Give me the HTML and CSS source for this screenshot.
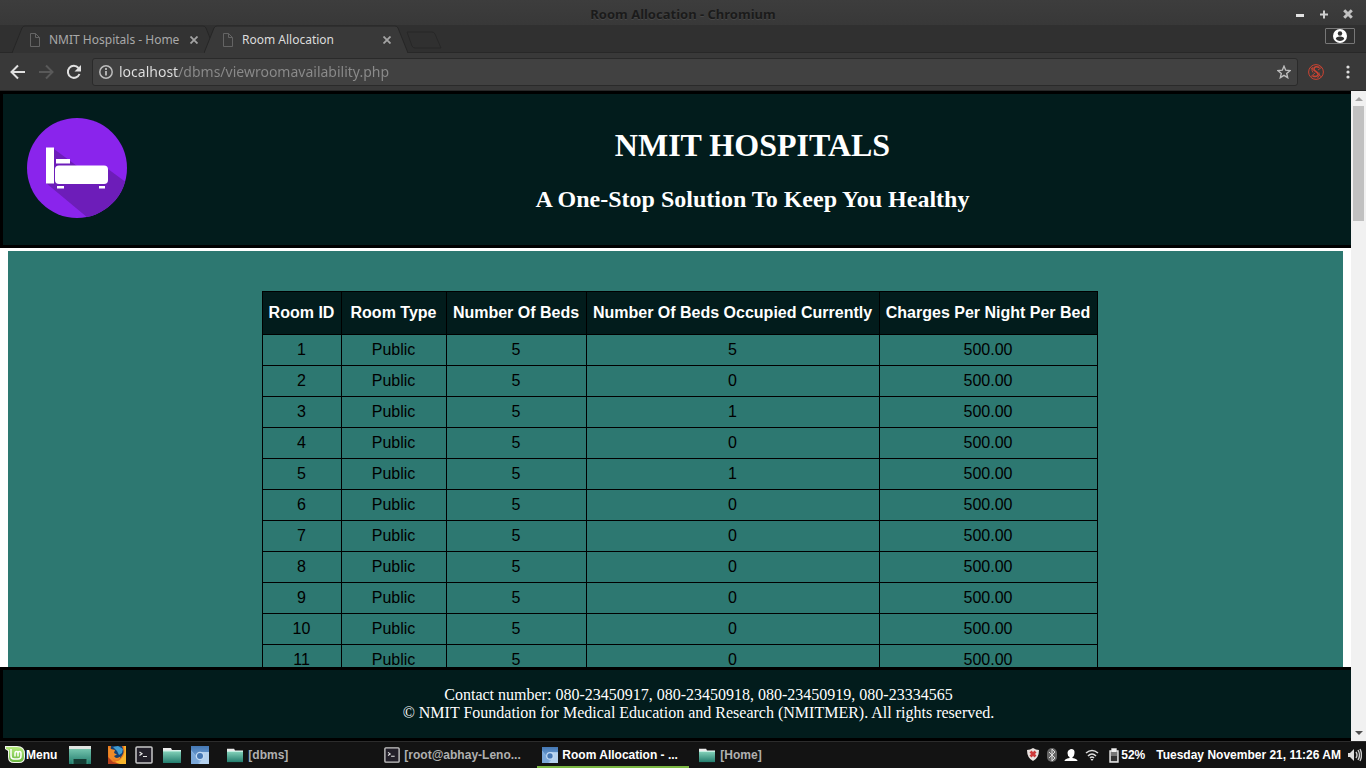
FILE: index.html
```html
<!DOCTYPE html>
<html lang="en">
<head>
<meta charset="utf-8">
<title>Room Allocation</title>
<link rel="stylesheet" href="styles.css">
</head>
<body>
<svg class="defs" aria-hidden="true">
  <defs>
    <linearGradient id="teal" x1="0" y1="0" x2="0" y2="1"><stop offset="0" stop-color="#84d2ba"/><stop offset="1" stop-color="#237d6e"/></linearGradient>
    <linearGradient id="mint" x1="0" y1="0" x2="0" y2="1"><stop offset="0" stop-color="#b5ec7e"/><stop offset="1" stop-color="#69b53f"/></linearGradient>
    <linearGradient id="sky" x1="0" y1="0" x2="0" y2="1"><stop offset="0" stop-color="#4478b4"/><stop offset="1" stop-color="#6b9bd0"/></linearGradient>
    <symbol id="folder" viewBox="0 0 20 18"><path d="M1 2h8l1 2h9v13H1z" fill="#ededed"/><path d="M1 5h18v12H1z" fill="url(#teal)"/><path d="M1 5h18" stroke="#c9f2e6"/></symbol>
    <symbol id="terminal" viewBox="0 0 18 18"><rect x="1" y="1" width="16" height="16" rx="1" fill="#221f29" stroke="#c9c9c9" stroke-width="1.5"/><path d="M4.500 6l2.500 1.800-2.500 1.800M8 10.500h4" fill="none" stroke="#e5e5e5" stroke-width="1.2"/></symbol>
    <symbol id="chromium" viewBox="0 0 18 18"><rect width="18" height="18" rx="1" fill="#8db6e2"/><path d="M0 0h18v6H9L5 10 0 4z" fill="url(#sky)"/><path d="M9 6h9v12H8l5-8z" fill="#b4d1ee"/><path d="M0 5l5 6 3 3-1 4H0z" fill="#7ba8d9"/><circle cx="9" cy="10" r="4.300" fill="#c4dbf3"/><circle cx="9" cy="10" r="3" fill="#4577b3"/></symbol>
    <symbol id="page" viewBox="0 0 10 14"><path d="M.5.5h5l4 4v9h-9zM5.500 .5v4h4" fill="none" stroke="#646464"/></symbol>
    <symbol id="cross" viewBox="0 0 8 8"><path d="M.5.5l7 7M7.500 .5l-7 7" stroke="currentColor" stroke-width="1.8"/></symbol>
  </defs>
</svg>
<div class="titlebar">
  <span class="title">Room Allocation - Chromium</span>
  <div class="window-controls">
    <button aria-label="Minimize"><svg width="10" height="12"><path d="M1 7.500h8" stroke="#e2e2e2" stroke-width="3"/></svg></button>
    <button aria-label="Maximize"><svg width="10" height="12"><path d="M1 6.500h8M5 2.500v8" stroke="#cfcfcf" stroke-width="2"/></svg></button>
    <button aria-label="Close"><svg width="10" height="12"><path d="M1.200 2.200l7.600 7.600M8.800 2.200L1.200 9.800" stroke="#c2c2c2" stroke-width="3"/></svg></button>
  </div>
</div>
<div class="tabstrip">
  <div class="tab">
    <svg class="tab-shape" viewBox="0 0 204 28" preserveAspectRatio="none"><path d="M0 28L10 3Q11 1 13 1H191Q193 1 194 3L204 28" fill="#333" stroke="#262626"/></svg>
    <svg class="page-icon"><use href="#page"/></svg><a href="#home">NMIT Hospitals - Home</a>
    <button class="tab-close" aria-label="Close tab"><svg width="8" height="8"><use href="#cross"/></svg></button>
  </div>
  <div class="tab active">
    <svg class="tab-shape" viewBox="0 0 204 28" preserveAspectRatio="none"><path d="M0 28L10 3Q11 1 13 1H191Q193 1 194 3L204 28" fill="#393939" stroke="#262626"/></svg>
    <svg class="page-icon"><use href="#page"/></svg><a href="#rooms">Room Allocation</a>
    <button class="tab-close" aria-label="Close tab"><svg width="8" height="8"><use href="#cross"/></svg></button>
  </div>
  <button class="new-tab" aria-label="New tab"><svg width="36" height="18"><path d="M1 1h25q2 0 3 2l6 14H9q-2 0-3-2z" fill="#303030" stroke="#272727"/></svg></button>
  <button class="profile" aria-label="Profile"><svg width="14" height="14"><circle cx="7" cy="7" r="7" fill="#fff"/><circle cx="7" cy="4.500" r="2.200" fill="#303030"/><path d="M2.800 10q0-2.500 4.200-2.500t4.200 2.500Q9.500 12 7 12t-4.200-2z" fill="#303030"/></svg></button>
</div>
<div class="toolbar">
  <button aria-label="Back"><svg width="16" height="16"><path d="M15 8H2M8 1.500L1.500 8 8 14.500" fill="none" stroke="#e0e0e0" stroke-width="2"/></svg></button>
  <button aria-label="Forward"><svg width="16" height="16"><path d="M1 8h13M8 1.500L14.500 8 8 14.500" fill="none" stroke="#595959" stroke-width="2"/></svg></button>
  <button aria-label="Reload"><svg width="16" height="16"><path d="M13.500 10A6 6 0 1 1 12.500 4" fill="none" stroke="#e0e0e0" stroke-width="2"/><path d="M15 1v6.500H8.500z" fill="#e0e0e0"/></svg></button>
  <div class="address">
    <svg width="14" height="14"><circle cx="7" cy="7" r="6.200" fill="none" stroke="#bdbdbd" stroke-width="1.500"/><path d="M7 6v4.500M7 3v2" stroke="#bdbdbd" stroke-width="1.800"/></svg>
    <input type="text" aria-label="Address" value="localhost/dbms/viewroomavailability.php">
    <button aria-label="Bookmark"><svg width="14" height="14"><path d="M7 1.200l1.700 4 4.300.4-3.300 2.800 1 4.300L7 10.400l-3.700 2.300 1-4.300L1 5.600l4.300-.4z" fill="none" stroke="#bdbdbd" stroke-width="1.400"/></svg></button>
  </div>
  <button class="extension" aria-label="Extension"><svg width="16" height="16" fill="none" stroke="#cb4433"><circle cx="8" cy="8" r="7.400" stroke-width="1"/><path d="M11.500 3.500Q7 1.500 6 4.500C5 7.500 11 7.500 10 11 9 13 6 12.500 4.500 12" stroke-width="1.500"/><path d="M2.500 3.500l11 9.500M3 12.500l4-3.500M10 6l4-3M11 8.500q1.500 3-1.500 5.500M5 3Q2.500 6 5 8.500" stroke-width=".9"/></svg></button>
  <button aria-label="Browser menu"><svg width="16" height="16" fill="#dedede"><circle cx="8" cy="3" r="1.600"/><circle cx="8" cy="8" r="1.600"/><circle cx="8" cy="13" r="1.600"/></svg></button>
</div>
<div class="viewport">
  <div class="page">
    <header class="banner">
      <svg class="logo" width="100" height="100" viewBox="0 0 100 100" role="img" aria-label="Hospital bed">
        <defs><clipPath id="disc"><circle cx="50" cy="50" r="50"/></clipPath></defs>
        <g clip-path="url(#disc)"><path d="M0 0h100v100H0z" fill="#8a24ec"/><path d="M19 65l42 35h39V65L81 51 50 48 27 31z" fill="#6d1db9"/></g>
        <path d="M19 29.500h8v36h-8zM29 41h14v4.500H29zM30 68h7v2.500h-7zM72 68h6v2.500h-6z" fill="#fff"/><rect x="28" y="47.500" width="53" height="18.500" rx="4" fill="#fff"/>
      </svg>
      <div class="heading"><h1>NMIT HOSPITALS</h1><h2>A One-Stop Solution To Keep You Healthy</h2></div>
    </header>
    <main class="content">
      <table>
        <colgroup><col class="id"><col class="type"><col class="beds"><col class="occupied"><col class="charges"></colgroup>
        <thead><tr><th>Room ID</th><th>Room Type</th><th>Number Of Beds</th><th>Number Of Beds Occupied Currently</th><th>Charges Per Night Per Bed</th></tr></thead>
        <tbody>
          <tr><td>1</td><td>Public</td><td>5</td><td>5</td><td>500.00</td></tr>
          <tr><td>2</td><td>Public</td><td>5</td><td>0</td><td>500.00</td></tr>
          <tr><td>3</td><td>Public</td><td>5</td><td>1</td><td>500.00</td></tr>
          <tr><td>4</td><td>Public</td><td>5</td><td>0</td><td>500.00</td></tr>
          <tr><td>5</td><td>Public</td><td>5</td><td>1</td><td>500.00</td></tr>
          <tr><td>6</td><td>Public</td><td>5</td><td>0</td><td>500.00</td></tr>
          <tr><td>7</td><td>Public</td><td>5</td><td>0</td><td>500.00</td></tr>
          <tr><td>8</td><td>Public</td><td>5</td><td>0</td><td>500.00</td></tr>
          <tr><td>9</td><td>Public</td><td>5</td><td>0</td><td>500.00</td></tr>
          <tr><td>10</td><td>Public</td><td>5</td><td>0</td><td>500.00</td></tr>
          <tr><td>11</td><td>Public</td><td>5</td><td>0</td><td>500.00</td></tr>
        </tbody>
      </table>
    </main>
    <footer class="contact">
      <p>Contact number: 080-23450917, 080-23450918, 080-23450919, 080-23334565</p>
      <p>© NMIT Foundation for Medical Education and Research (NMITMER). All rights reserved.</p>
    </footer>
  </div>
  <div class="scrollbar">
    <svg width="15" height="15"><path d="M4 10h8L8 6z" fill="#a3a3a3"/></svg>
    <div class="thumb"></div>
    <svg class="down" width="15" height="15"><path d="M4 5h8L8 9z" fill="#505050"/></svg>
  </div>
</div>
<div class="taskbar">
  <button class="menu"><svg width="20" height="18"><path d="M0 0h12q8 0 8 8v3q0 6-6 6H9q-6 0-6-6V5L0 3z" fill="#f3f7ee"/><path d="M1 1h11q7 0 7 7v3q0 5-5 5H9q-5 0-5-5V4L1 3z" fill="url(#mint)"/><path d="M6 3v7q0 3 3 3h4q3 0 3-3V7.500q0-2-1.500-2T13 7.500v3M13 7.500q0-2-1.500-2T10 7.500v3" fill="none" stroke="#fff" stroke-width="1.500"/></svg>Menu</button>
  <div class="launchers">
    <button class="desktop" aria-label="Show desktop"><svg width="22" height="18"><path d="M0 0h22v18H0z" fill="url(#teal)"/><path d="M0 0h22v3H0z" fill="#e1e5e2"/><path d="M4 13h14v5H4z" fill="#153c34"/><path d="M0 13h4v5M18 18v-5h4" stroke="#439b85" fill="none"/></svg></button>
    <button aria-label="Firefox"><svg width="18" height="18"><path d="M0 0h18v18H0z" fill="#e97820"/><path d="M3 0h12l1 6-4 7-6 1-4-6z" fill="#163f70"/><path d="M5 1l5-1 5 3-1 4-3 2-2-4z" fill="#3f9bd0"/><path d="M0 1l3 2 4 1-1 3 3 1.500L6 10q2 3.500 6.500.5L11 15H6L1 12z" fill="#ef8a27"/><path d="M14 0q4 8-2 12.500Q8 15 4 12l4 6h10V0z" fill="#e97820"/><path d="M16 0q2 8-3 13-3 3-6 2l3 3h8V0z" fill="#f7b42c"/><path d="M0 11l5 5 7 2H0z" fill="#b5401d"/></svg></button>
    <button aria-label="Terminal"><svg width="18" height="18"><use href="#terminal"/></svg></button>
    <button aria-label="Files"><svg width="20" height="18"><use href="#folder"/></svg></button>
    <button aria-label="Chromium"><svg width="18" height="18"><use href="#chromium"/></svg></button>
  </div>
  <div class="tasks">
    <button class="task"><svg width="18" height="16"><use href="#folder"/></svg>[dbms]</button>
    <button class="task"><svg width="16" height="16"><use href="#terminal"/></svg>[root@abhay-Leno...</button>
    <button class="task current"><svg width="16" height="16"><use href="#chromium"/></svg>Room Allocation - ...</button>
    <button class="task"><svg width="18" height="16"><use href="#folder"/></svg>[Home]</button>
  </div>
  <div class="tray">
    <svg width="14" height="16"><path d="M7 1q3 2 6 2 0 8-6 11Q1 11 1 3q3 0 6-2z" fill="#e8e2df"/><path d="M4.500 4.500l5 5M9.500 4.500l-5 5" stroke="#ce3a3a" stroke-width="2.800"/></svg>
    <svg width="10" height="16"><rect y="1" width="10" height="14" rx="5" fill="#666"/><path d="M2 5l6 6-3 3V2l3 3-6 6" fill="none" stroke="#ddd"/></svg>
    <svg width="14" height="16"><path d="M7 2q4 0 3.500 4T8.500 10v1q5 1 5 3H.5q0-2 5-3v-1Q3.500 9 3.500 6T7 2z" fill="#fff"/></svg>
    <svg width="14" height="16" fill="none" stroke="#ddd" stroke-width="1.600"><path d="M1 6q6-5 12 0M3 9q4-4 8 0M5 11q2-2 4 0"/><path d="M5.500 12h3L7 14z" fill="#eee" stroke="none"/></svg>
    <div class="battery"><svg width="10" height="16"><path d="M1 4h2V2h4v2h2v11H1z" fill="#777" stroke="#e5e5e5" stroke-width="1.400"/><path d="M2 9h6v5H2z" fill="#333"/><path d="M3 2h4v3H3z" fill="#eee"/></svg>52%</div>
    <time datetime="2017-11-21T11:26">Tuesday November 21, 11:26 AM</time>
    <svg width="14" height="16"><path d="M0 6h2l4-4v12l-4-4H0z" fill="#ddd"/><path d="M8 5q2 3 0 6M10 3q3 5 0 10M12 2q3 6 0 12" fill="none" stroke="#ccc" stroke-width="1.400"/></svg>
  </div>
</div>
</body>
</html>
```
FILE: styles.css
```css
* { box-sizing: border-box; }
body {
  margin: 0;
  height: 100vh;
  display: flex;
  flex-direction: column;
  overflow: hidden;
  background: #393939;
  font-family: "Liberation Sans", Arial, sans-serif;
}
button {
  display: flex;
  align-items: center;
  padding: 0;
  border: 0;
  background: none;
  color: inherit;
  font: inherit;
}
svg { display: block; flex: none; }
.defs { position: absolute; width: 0; height: 0; }

.titlebar {
  flex: none;
  display: grid;
  grid-template-columns: 1fr auto 1fr;
  align-items: center;
  height: 25px;
  padding: 3px 13px 0 13px;
  background: linear-gradient(#3d3d3d, #383838);
}
.title {
  grid-column: 2;
  color: #1b1b1b;
  font: bold 13px/20px "Noto Sans", sans-serif;
  text-shadow: 0 1px #484848;
}
.window-controls { display: flex; justify-content: flex-end; gap: 14px; }

.tabstrip {
  flex: none;
  display: flex;
  align-items: flex-start;
  height: 28px;
  padding: 0 11px 0 12px;
  background: #303030;
  box-shadow: inset 0 -1px #282828;
}
.tab {
  position: relative;
  display: flex;
  align-items: center;
  width: 204px;
  height: 28px;
  padding: 2px 18px 0;
  color: #a9a9a9;
  font: 12px/18px "Noto Sans", sans-serif;
}
.tab > * { position: relative; }
.tab > .tab-shape { position: absolute; inset: 0; width: 100%; height: 100%; }
.tab.active { margin-left: -12px; padding: 2px 17px 0 19px; color: #dcdcdc; }
.tab a { flex: 1; margin-left: 9px; color: inherit; text-decoration: none; white-space: nowrap; }
.page-icon { width: 10px; height: 14px; }
.tab-close { color: #a4a4a4; }
.new-tab { margin-top: 6px; margin-left: -2px; }
.profile {
  justify-content: center;
  width: 30px;
  height: 16px;
  margin-top: 3px;
  margin-left: auto;
  border: 1px solid #777;
  border-radius: 1px;
}

.toolbar {
  flex: none;
  display: flex;
  align-items: center;
  gap: 12px;
  height: 38px;
  padding: 0 10px;
  border-bottom: 1px solid #282828;
  background: #393939;
}
.address {
  flex: 1;
  display: flex;
  align-items: center;
  gap: 6px;
  height: 28px;
  margin-left: -2px;
  padding: 0 6px;
  border: 1px solid #2a2a2a;
  border-radius: 3px;
  background: #414141;
}
.address input {
  flex: 1;
  min-width: 0;
  padding: 0;
  border: 0;
  outline: 0;
  background: linear-gradient(to right, #e2e2e2 60px, #8b8b8b 60px);
  background-clip: text;
  color: transparent;
  font: 14px/20px "Noto Sans", sans-serif;
}
.extension { margin: 0 4px 0 -2px; }

.viewport { flex: 1; min-height: 0; display: flex; }
.page {
  flex: 1;
  min-width: 0;
  display: flex;
  flex-direction: column;
  overflow: hidden;
  background: #fff;
}
.banner {
  flex: none;
  display: flex;
  border: 3px solid #000;
  border-right: 0;
  padding: 24px 0 27px 24px;
  background: #021c1c;
  color: #fff;
  font-family: "Liberation Serif", "Times New Roman", serif;
  text-align: center;
}
.heading { flex: 1; margin-left: 27px; padding-top: 9px; }
h1 { margin: 0 0 21px; font-size: 32px; line-height: 37px; }
h2 { margin: 0; font-size: 24px; line-height: 28px; }
.content {
  flex: 1;
  min-height: 0;
  overflow: hidden;
  margin: 3px 8px 0;
  padding: 40px 0 0 9px;
  background: #2d7871;
}
table {
  table-layout: fixed;
  width: 836px;
  margin: 0 auto;
  border-collapse: collapse;
  font-size: 16px;
  line-height: 18px;
  text-align: center;
}
.id { width: 79px; }
.type { width: 105px; }
.beds { width: 140px; }
.occupied { width: 293px; }
.charges { width: 218px; }
th, td { border: 1px solid #000; padding: 6px 1px 6px 0; white-space: nowrap; }
th { padding: 12px 1px 12px 0; background: #021c1c; color: #fff; }
.contact {
  flex: none;
  border: 3px solid #000;
  border-right: 0;
  padding: 16px 0 16px 43px;
  background: #021c1c;
  color: #fff;
  font: 16px/18px "Liberation Serif", "Times New Roman", serif;
  text-align: center;
}
.contact p { margin: 0; }
.scrollbar {
  flex: none;
  display: flex;
  flex-direction: column;
  width: 15px;
  background: #f1f1f1;
}
.thumb { height: 115px; margin: 0 2px; background: #c1c1c1; }
.down { margin-top: auto; }

.taskbar {
  flex: none;
  display: flex;
  align-items: center;
  height: 27px;
  padding: 0 4px 0 5px;
  border-top: 1px solid #2c2c2c;
  background: #131313;
  color: #fff;
  font-size: 12px;
  font-weight: bold;
  line-height: 16px;
}
.menu { gap: 1px; }
.launchers { display: flex; align-items: center; gap: 9px; margin-left: 12px; }
.launchers .desktop { margin-right: 8px; }
.tasks { display: flex; align-self: stretch; margin-left: 12px; }
.task {
  gap: 4px;
  width: 158px;
  padding: 0 5px;
  color: #b0b0b0;
  white-space: nowrap;
}
.current { width: 152px; color: #fff; box-shadow: inset 0 -2px #7cb843; }
.task:last-child { width: 80px; padding-left: 9px; }
.tray { display: flex; align-items: center; gap: 7px; margin-left: auto; }
.battery { display: flex; gap: 2px; margin-left: 3px; }
.tray time { margin-left: 4px; }
```
